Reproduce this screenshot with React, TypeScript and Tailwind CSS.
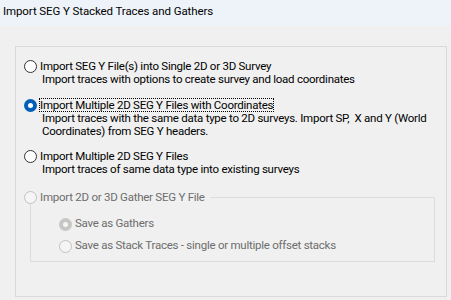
import React from "react";

type RadioProps = {
  checked?: boolean;
  disabled?: boolean;
};

function Radio({ checked, disabled }: RadioProps) {
  if (checked && !disabled) {
    return (
      <span className="flex h-[13px] w-[13px] flex-none items-center justify-center rounded-full bg-[#005fb8]">
        <span className="h-[5px] w-[5px] rounded-full bg-white" />
      </span>
    );
  }
  if (checked && disabled) {
    return (
      <span className="flex h-[13px] w-[13px] flex-none items-center justify-center rounded-full bg-[#c6c6c6]">
        <span className="h-[5px] w-[5px] rounded-full bg-[#f4f4f4]" />
      </span>
    );
  }
  return (
    <span
      className={`block h-[13px] w-[13px] flex-none rounded-full border ${
        disabled ? "border-[#c2c2c2] bg-[#f5f5f5]" : "border-[#333333] bg-white"
      }`}
    />
  );
}

interface OptionProps {
  label: string;
  lines: string[];
  checked?: boolean;
  focused?: boolean;
  className?: string;
}

function Option({ label, lines, checked, focused, className }: OptionProps) {
  return (
    <div className={className}>
      <div className="flex items-start">
        <span className="mt-[1px]">
          <Radio checked={checked} />
        </span>
        <span
          className={`ml-[2px] block border leading-[12px] ${
            focused ? "border-dotted border-black" : "border-transparent"
          }`}
        >
          {label}
        </span>
      </div>
      <div className="ml-[18px] leading-[13px]">
        {lines.map((line) => (
          <div key={line} className="whitespace-pre">
            {line}
          </div>
        ))}
      </div>
    </div>
  );
}

export default function App() {
  return (
    <div
      className="h-[300px] w-[451px] overflow-hidden bg-[#f0f0f0] text-[11.5px] tracking-[-0.25px] text-black"
      style={{ fontFamily: 'Roboto, "Liberation Sans", Arial, sans-serif' }}
    >
      <div className="h-[26px] bg-[#eef3fa] pl-[3px] pt-[5px] leading-[13px] tracking-[-0.1px]">
        Import SEG Y Stacked Traces and Gathers
      </div>

      <div className="ml-[15px] mt-[20px] h-[251px] w-[432px] border border-[#d9d9d9] pl-[8px] pt-[12px]">
        <Option
          label="Import SEG Y File(s) into Single 2D or 3D Survey"
          lines={["Import traces with options to create survey and load coordinates"]}
        />
        <Option
          className="mt-[12px]"
          checked
          focused
          label="Import Multiple 2D SEG Y Files with Coordinates"
          lines={[
            "Import traces with the same data type to 2D surveys. Import SP,  X and Y (World",
            "Coordinates) from SEG Y headers.",
          ]}
        />
        <Option
          className="mt-[11px]"
          label="Import Multiple 2D SEG Y Files"
          lines={["Import traces of same data type into existing surveys"]}
        />

        <fieldset className="ml-[6px] mt-[15px] w-[405px] border border-[#dcdcdc] px-0 pb-[8px] pt-0 text-[#6d6d6d]">
          <legend className="ml-[-7px] flex items-center pr-[5px] leading-[13px]">
            <Radio disabled />
            <span className="ml-[3px]">Import 2D or 3D Gather SEG Y File</span>
          </legend>
          <div className="mt-[13px] flex items-start pl-[28px] leading-[13px]">
            <span className="mt-[1px]">
              <Radio checked disabled />
            </span>
            <span className="ml-[3px]">Save as Gathers</span>
          </div>
          <div className="mt-[8px] flex items-start pl-[28px] leading-[13px]">
            <span className="mt-[1px]">
              <Radio disabled />
            </span>
            <span className="ml-[3px]">
              Save as Stack Traces - single or multiple offset stacks
            </span>
          </div>
        </fieldset>
      </div>
    </div>
  );
}
